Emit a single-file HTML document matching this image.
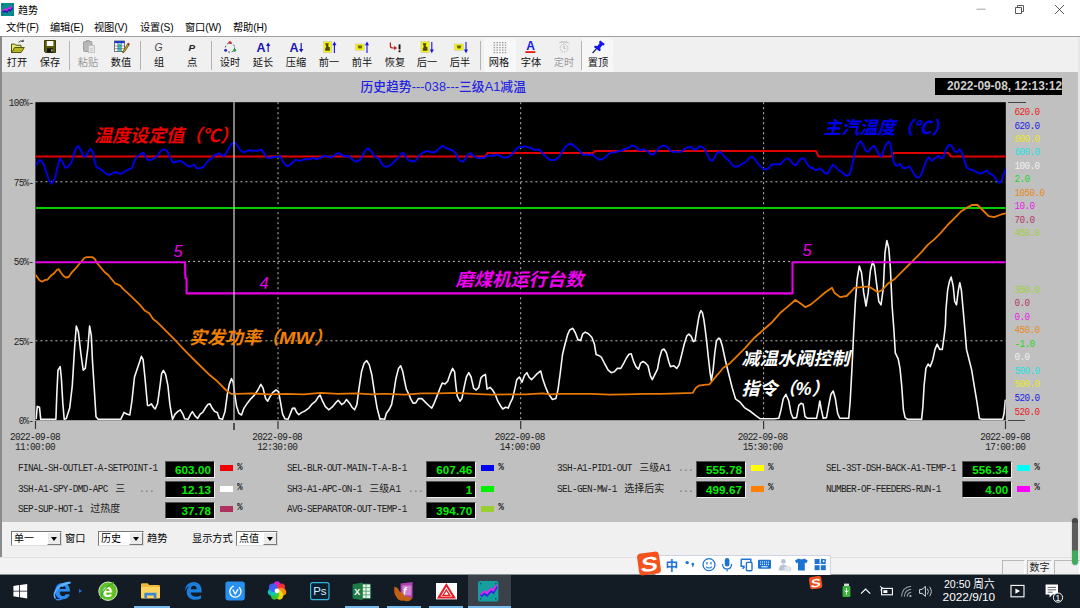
<!DOCTYPE html><html lang="zh"><head><meta charset="utf-8"><title>趋势</title><style>
*{box-sizing:border-box;margin:0;padding:0}
html,body{width:1080px;height:608px;overflow:hidden;background:#f0f0f0}
body{position:relative;font-family:"Liberation Sans","Noto Sans CJK SC",sans-serif;font-size:10px;color:#000}
.abs{position:absolute}
#title{left:0;top:0;width:1080px;height:19px;background:#fff}
#menu{left:0;top:19px;width:1080px;height:17px;background:#fff}
#menu span{position:absolute;top:2px;font-size:10.2px;line-height:13px;white-space:nowrap;letter-spacing:-0.1px}
#tb{left:0;top:36px;width:1080px;height:36px;background:#f0f0f0;border-top:1px solid #a0a0a0}
.tbl{position:absolute;top:19px;font-size:10.2px;line-height:13px;width:30px;text-align:center;white-space:nowrap;color:#111}
.sep{position:absolute;top:4px;width:1px;height:29px;background:#b4b4b4}
#main{left:0;top:72px;width:1080px;height:450px;background:#c0c0c0}
#lb{left:0;top:36px;width:2px;height:521px;background:#8a8a8a;z-index:5}
.mono{font-family:"Liberation Mono","Noto Sans CJK SC",monospace;font-size:9.4px;letter-spacing:-0.64px;white-space:nowrap;color:#222;line-height:10px;transform:scaleY(1.16);transform-origin:50% 60%}
.sc{position:absolute;left:1014.6px;font-family:"Liberation Mono",monospace;font-size:9.4px;letter-spacing:-0.64px;line-height:10px;white-space:nowrap;transform:scaleY(1.16);transform-origin:50% 60%}
.yl{position:absolute;width:33.6px;text-align:right;left:0}
.xl{position:absolute;width:60px;text-align:center}
.lg{position:absolute;white-space:nowrap;line-height:11px;font-size:9.4px}
.cj{font-family:"Liberation Mono","Noto Sans CJK SC",sans-serif;font-size:10px;letter-spacing:0;color:#222;margin-left:7.5px}
.vb{position:absolute;width:49.6px;height:17px;background:#000;border:1px solid #555;border-right-color:#eee;border-bottom-color:#eee;color:#00f000;font-weight:bold;font-size:11.6px;line-height:15px;text-align:right;padding-right:2.6px;font-family:"Liberation Sans",sans-serif;letter-spacing:0.1px}
.sw{position:absolute;width:13px;height:6px}
.pc{position:absolute}
#ctl{left:0;top:522px;width:1080px;height:36px;background:#f0f0f0}
.cb{position:absolute;top:9px;height:15px;background:#fff;border:1px solid #777;border-right-color:#ddd;border-bottom-color:#ddd;font-size:10px;line-height:13px;padding-left:2px;white-space:nowrap}
.cb i{position:absolute;right:0;top:0;width:14px;height:13px;background:#ececec;border:1px solid #777;border-left-color:#fff;border-top-color:#fff}
.cb i:after{content:"";position:absolute;left:3px;top:4px;border:3px solid transparent;border-top:4px solid #000;border-bottom:0}
.ct{position:absolute;top:10px;font-size:10.2px;line-height:13px;white-space:nowrap}
#status{left:0;top:557px;width:1080px;height:18px;background:#f2f2f2;border-top:1px solid #e0e0e0}
#task{left:0;top:574px;width:1080px;height:34px;background:#141c26}
.ul{position:absolute;top:32px;height:2px;background:#76b9ed}
</style></head><body>
<div id="title" class="abs">
<svg class="abs" style="left:1.2px;top:2.8px" width="13.3" height="13.1" viewBox="0 0 14 14" preserveAspectRatio="none"><rect width="14" height="14" rx="0.8" fill="#0c8e8e"/><circle cx="1.6" cy="1.6" r="0.7" fill="#064848"/><circle cx="12.4" cy="1.6" r="0.7" fill="#064848"/><circle cx="1.6" cy="12.4" r="0.7" fill="#064848"/><circle cx="12.4" cy="12.4" r="0.7" fill="#064848"/><path d="M2,9.6 L4.6,8 L6,9.2 L8.4,6.6 L9.8,7.6 L12,4.6" stroke="#1c1cb0" stroke-width="2.4" fill="none"/><path d="M2,8.2 L4.6,6.6 L6,7.8 L8.4,5.2 L9.8,6.2 L11.6,3.4" stroke="#e61ee6" stroke-width="1.5" fill="none"/></svg>
<span class="abs" style="left:18px;top:3.8px;font-size:10px;line-height:13px">趋势</span>
<svg class="abs" style="left:960px;top:0" width="120" height="19" viewBox="0 0 120 19"><path d="M16.5,9.2 h9" stroke="#999" stroke-width="0.9" fill="none"/><path d="M55.5,7.5 h6 v6 h-6 z M57.5,7.5 v-2 h6 v6 h-2" stroke="#333" stroke-width="0.8" fill="none"/><path d="M95,5 l9,9 M104,5 l-9,9" stroke="#333" stroke-width="0.8" fill="none"/></svg>
</div>
<div id="menu" class="abs">
<span style="left:6px">文件(F)</span>
<span style="left:50px">编辑(E)</span>
<span style="left:94px">视图(V)</span>
<span style="left:140px">设置(S)</span>
<span style="left:185px">窗口(W)</span>
<span style="left:233px">帮助(H)</span>
</div>
<div id="tb" class="abs">
<div class="abs" style="left:582px;top:1px;width:31px;height:34px;background:#f6f6f6"></div>
<div class="abs" style="left:484px;top:1px;width:32px;height:34px;background:#f7f7f7"></div>
<span class="tbl" style="left:2px;color:#111">打开</span>
<span class="tbl" style="left:35px;color:#111">保存</span>
<span class="tbl" style="left:73px;color:#9a9a9a">粘贴</span>
<span class="tbl" style="left:106px;color:#111">数值</span>
<span class="tbl" style="left:144px;color:#111">组</span>
<span class="tbl" style="left:177px;color:#111">点</span>
<span class="tbl" style="left:215px;color:#111">设时</span>
<span class="tbl" style="left:248px;color:#111">延长</span>
<span class="tbl" style="left:281px;color:#111">压缩</span>
<span class="tbl" style="left:314px;color:#111">前一</span>
<span class="tbl" style="left:347px;color:#111">前半</span>
<span class="tbl" style="left:380px;color:#111">恢复</span>
<span class="tbl" style="left:412px;color:#111">后一</span>
<span class="tbl" style="left:445px;color:#111">后半</span>
<span class="tbl" style="left:484px;color:#111">网格</span>
<span class="tbl" style="left:516px;color:#111">字体</span>
<span class="tbl" style="left:549px;color:#9a9a9a">定时</span>
<span class="tbl" style="left:583px;color:#111">置顶</span>
<div class="sep" style="left:69px"></div>
<div class="sep" style="left:140px"></div>
<div class="sep" style="left:211px"></div>
<div class="sep" style="left:479.5px"></div>
<div class="sep" style="left:581px"></div>
</div>
<div id="main" class="abs"></div>
<div id="lb" class="abs"></div>
<div class="abs" style="left:1078px;top:37px;width:2px;height:520px;background:#e6e6e6;z-index:4"></div>
<svg class="abs" style="left:0;top:36px" width="640" height="36" viewBox="0 36 640 36" font-family="Liberation Sans,sans-serif">
<path d="M11.5,52.5 v-8.5 h3.2 l1,1.2 h5.3 v2.3" fill="#e6e66e" stroke="#55550a" stroke-width="1"/>
<path d="M11.5,52.5 l3.2,-5 h9.6 l-3.2,5 z" fill="#b4b428" stroke="#55550a" stroke-width="1"/>
<path d="M18.5,42.3 q2.2,-2.6 4.6,-0.6" stroke="#333" fill="none" stroke-width="0.9"/><path d="M21.3,41.2 l2.4,0.8 l-0.2,-2.4 z" fill="#333"/>
<path d="M44.5,40.5 h11 v12 h-10 l-1,-1 z" fill="#5a5a10" stroke="#3c3c00" stroke-width="1"/>
<rect x="46.8" y="41" width="6.6" height="5" fill="#fafafa"/>
<rect x="47" y="48.3" width="6" height="4.2" fill="#111"/><rect x="51.3" y="49.3" width="1.2" height="2.2" fill="#ddd"/>
<rect x="83.5" y="41.5" width="8.5" height="10" rx="1" fill="#b8b8b8" stroke="#a0a0a0" stroke-width="1"/><rect x="86" y="40" width="3.6" height="2.4" fill="#a8a8a8"/>
<rect x="88.5" y="45.5" width="6" height="7" fill="#e6e6e6" stroke="#bbb" stroke-width="0.8"/><path d="M90,48.5 h3 M90,50.3 h3" stroke="#bbb" stroke-width="0.6"/>
<rect x="114.5" y="41" width="10" height="10.5" fill="#fff" stroke="#555" stroke-width="0.8"/>
<rect x="114.5" y="41" width="10" height="2.2" fill="#2038c8"/>
<rect x="118" y="43.6" width="3.2" height="7.6" fill="#30d0d0"/>
<path d="M114.5,46 h10 M114.5,48.7 h10 M117.8,43 v8.5 M121.3,43 v8.5" stroke="#555" stroke-width="0.6"/>
<path d="M127.6,44 l-4.2,6.6 l-0.6,2.4 l2,-1.5 l4.2,-6.6 z" fill="#d8c020" stroke="#403000" stroke-width="0.7"/><path d="M127.6,44 l1.4,0.9 l0.6,-1 l-1.4,-0.9 z" fill="#d02020" stroke="#802020" stroke-width="0.5"/>
<text x="154.4" y="51" font-size="10.4" font-style="italic" fill="#4a4a4a">G</text>
<text x="188.6" y="51" font-size="9.8" font-style="italic" font-weight="bold" fill="#222">P</text>
<circle cx="230" cy="47.6" r="4.6" fill="none" stroke="#333" stroke-width="1" stroke-dasharray="1.6,2"/>
<circle cx="230" cy="42.4" r="1.5" fill="#d03030"/><circle cx="234.6" cy="50.2" r="1.5" fill="#20a040"/><circle cx="225.6" cy="50.2" r="1.5" fill="#3030c0"/>
<text x="256.5" y="52" font-size="12.5" font-weight="bold" fill="#1818b0">A</text>
<path d="M268.2,52 V44" stroke="#1818b0" stroke-width="1.2"/><path d="M266.0,46 L268.2,42.6 L270.4,46 z" fill="#1818b0"/>
<text x="289.5" y="52" font-size="12.5" font-weight="bold" fill="#1818b0">A</text>
<path d="M301.2,43 V51" stroke="#1818b0" stroke-width="1.2"/><path d="M299.0,49 L301.2,52.4 L303.4,49 z" fill="#1818b0"/>
<rect x="323.4" y="41.6" width="8.4" height="11" fill="#f4f410" stroke="#c8c8a0" stroke-width="0.6"/>
<path d="M325.2,43.2 h3.6 l-0.8,3 l1.8,1 v3.6 h-4.6 v-2.4 l1,-1.6 z" fill="#4a4a00"/>
<path d="M334.4,53 V43.5" stroke="#1010f0" stroke-width="1.1"/><path d="M332.4,45.2 L334.4,41.6 L336.4,45.2 z" fill="#1010f0"/>
<rect x="355.6" y="44" width="8.6" height="6.2" fill="#f4f410" stroke="#c8c8a0" stroke-width="0.6"/>
<path d="M357.6,45.4 h4.8 l-0.8,3 h-3.2 z" fill="#6a6a00"/>
<path d="M367,53 V43.5" stroke="#1010f0" stroke-width="1.1"/><path d="M365,45.2 L367,41.6 L369,45.2 z" fill="#1010f0"/>
<path d="M390.4,42.4 V46 Q390.4,48 393,48 H395" stroke="#c01818" stroke-width="1.2" fill="none"/><path d="M394.2,45.8 L397,48 L394.2,50.2 z" fill="#c01818"/>
<rect x="398.6" y="44.4" width="1.9" height="5" fill="#111"/><rect x="398.6" y="50.4" width="1.9" height="1.8" fill="#111"/>
<rect x="421" y="41.6" width="8.2" height="11" fill="#f4f410" stroke="#c8c8a0" stroke-width="0.6"/>
<path d="M422.8,43.2 h3.6 l-0.8,3 l1.8,1 v3.6 h-4.6 v-2.4 l1,-1.6 z" fill="#4a4a00"/>
<path d="M431.8,42 V51" stroke="#1010f0" stroke-width="1.1"/><path d="M429.8,49.6 L431.8,53.2 L433.8,49.6 z" fill="#1010f0"/>
<rect x="454.6" y="44" width="8.6" height="6.2" fill="#f4f410" stroke="#c8c8a0" stroke-width="0.6"/>
<path d="M456.6,45.4 h4.8 l-0.8,3 h-3.2 z" fill="#6a6a00"/>
<path d="M466,42 V51" stroke="#1010f0" stroke-width="1.1"/><path d="M464,49.6 L466,53.2 L468,49.6 z" fill="#1010f0"/>
<path d="M493.6,42.6 h12.6" stroke="#9a9a9a" stroke-width="1.1" stroke-dasharray="1.5,1.3"/>
<path d="M493.6,45.1 h12.6" stroke="#9a9a9a" stroke-width="1.1" stroke-dasharray="1.5,1.3"/>
<path d="M493.6,47.6 h12.6" stroke="#9a9a9a" stroke-width="1.1" stroke-dasharray="1.5,1.3"/>
<path d="M493.6,50.1 h12.6" stroke="#9a9a9a" stroke-width="1.1" stroke-dasharray="1.5,1.3"/>
<path d="M493.6,52.6 h12.6" stroke="#9a9a9a" stroke-width="1.1" stroke-dasharray="1.5,1.3"/>
<text x="526.2" y="50.2" font-size="12" font-weight="bold" fill="#1818e0">A</text><rect x="525.4" y="51.2" width="10" height="1.8" fill="#e81818"/>
<circle cx="564" cy="48.2" r="3.9" fill="none" stroke="#b4b4b4" stroke-width="1" stroke-dasharray="1.4,1"/>
<path d="M559.4,43.4 q1.2,-2.4 3.4,-1.2 M568.6,43.4 q-1.2,-2.4 -3.4,-1.2 M564,41 v2.4 M564,46 v2.4 h1.6" stroke="#b0b0b0" stroke-width="1" fill="none"/>
<path d="M600.2,40.6 l4.6,3.4 l-1.2,1.6 l-1.2,-0.4 l-2.2,2.8 l0.6,2.2 l-1.4,1 l-5.6,-4.2 l1.2,-1.2 l2.4,0.2 l2.2,-2.8 l-0.6,-1.2 z" fill="#1414f0"/><path d="M596.6,48.6 L592.6,53" stroke="#1a1a60" stroke-width="1.2"/>
</svg>
<svg class="abs" style="left:0;top:0" width="1080" height="608" viewBox="0 0 1080 608">
<defs><clipPath id="cc"><rect x="35.4" y="102.2" width="970.4" height="318.0"/></clipPath></defs>
<rect x="35.4" y="102.2" width="970.4" height="318.0" fill="#000"/>
<g clip-path="url(#cc)">
<line x1="35.4" x2="1005.8" y1="181.8" y2="181.8" stroke="#bcbcbc" stroke-width="1" stroke-dasharray="2,3"/>
<line x1="188" x2="791.5" y1="261.4" y2="261.4" stroke="#bcbcbc" stroke-width="1" stroke-dasharray="2,3"/>
<line x1="35.4" x2="1005.8" y1="340.8" y2="340.8" stroke="#bcbcbc" stroke-width="1" stroke-dasharray="2,3"/>
<line x1="278" x2="278" y1="102.2" y2="420.2" stroke="#bcbcbc" stroke-width="1" stroke-dasharray="2,3"/>
<line x1="520.7" x2="520.7" y1="102.2" y2="420.2" stroke="#bcbcbc" stroke-width="1" stroke-dasharray="2,3"/>
<line x1="763.6" x2="763.6" y1="102.2" y2="420.2" stroke="#bcbcbc" stroke-width="1" stroke-dasharray="2,3"/>
<path d="M35,156.5 L485,156.5 L487.5,153 L593,153 L595,151 L816,151 L818.5,156.5 L891.5,156.5 L893.5,153 L948.5,153 L951,156.5 L1006,156.5" fill="none" stroke="#e00000" stroke-width="2" stroke-linejoin="round" stroke-linecap="round" />
<path d="M36,165 L40,159.7 L43.3,163.3 L46.7,173.3 L49.2,180.8 L51.7,183.7 L55,178.3 L57.5,166.7 L60,158.3 L62.5,161.7 L65,167.5 L67.5,167.5 L70.8,163.3 L73.3,157.5 L75.8,148.3 L78.3,145.8 L80.8,150 L83.3,155.8 L85.8,156.7 L88.3,151.7 L90.8,148.7 L93,152.5 L95,162.5 L96.7,167.5 L100,168.7 L103.3,171.3 L106.7,174.2 L110,174.7 L113.3,173 L115.8,172 L118.3,173.3 L121.7,173.7 L125,171.3 L128.3,169.7 L131.7,168.3 L134.2,161.7 L136.7,156.7 L140,154.7 L143,152.5 L145,155.8 L147.5,159.7 L150.8,160 L154.2,158.3 L157.5,155.8 L160.8,150.8 L164.2,149.2 L167,150.8 L170,157.5 L173,162.5 L176.7,161.7 L180,160.8 L183.3,162.5 L186.7,165.3 L190,166.7 L194.2,164.7 L196.7,168.3 L200,168.3 L203.3,167 L206.7,162.5 L210,159.2 L210.8,159.2 L215,155 L219.2,153.3 L222.5,155.8 L225,155.3 L228.3,149.2 L231.7,143.7 L235,142.5 L237.5,145.8 L240.8,150.8 L243.7,152.5 L248.3,150.3 L253.3,150.7 L258.3,150.7 L261.3,149.7 L264.2,153.3 L266.7,157.5 L270,158 L274.2,157 L278.3,156.7 L280.3,156.3 L282.5,160.8 L285.8,165.3 L288.3,166.3 L291.7,163.3 L295.8,159.7 L300,160.8 L304.2,159.3 L309.2,159.2 L313.3,158 L316.7,159.2 L320.8,157.5 L325,155.8 L328.3,156.7 L331.7,157.5 L335,154.7 L338.3,152.7 L341.7,155 L345,156.3 L348.3,155.8 L351.7,158.7 L355,161.3 L358.3,161.3 L361.7,157.5 L365,150.8 L367.5,148.3 L370.8,150.8 L374.2,155.8 L377.5,158.3 L380,160 L380.8,162.5 L384.2,166.3 L387.5,166.7 L391.7,164.2 L395.8,160 L399.2,156.7 L401.7,153.3 L403.3,153 L405.8,156.7 L408.3,160 L411.7,161.3 L414.7,161.3 L417.5,158.3 L420,154.7 L423.3,152.5 L427.5,150.8 L430.8,152.2 L435,152.2 L438.3,149.2 L441.3,146.7 L443.3,146 L445.8,148 L449.2,149.2 L452.5,150.3 L455,152.5 L457.5,157.5 L460,160.8 L463,161.7 L465.8,158.3 L468.3,154.2 L470.3,153 L472.5,155.3 L475.8,157.5 L480,158 L484.2,158 L486.7,155.8 L490,155.8 L494.2,155.8 L497.5,154.7 L500,155.8 L503.3,157.5 L507.5,157.5 L510.8,155.3 L514.2,151.3 L517.5,148 L520,146.7 L522.5,147.2 L525.3,146.2 L528.3,147.5 L530.8,148 L534.2,149.7 L537.5,149.7 L540,150 L542.5,153 L545.8,156.7 L550,159.7 L550.8,160 L555,160 L559.2,156.7 L562.5,150.8 L565.8,146.7 L569.2,144 L571.7,144 L575,146.7 L578.3,149.2 L580.8,152.5 L583.3,154.7 L587.5,154.7 L592.5,154.7 L595.8,157.5 L599.2,159.7 L601.7,159.3 L605,157.5 L608.3,154.2 L611.7,152.5 L615,152.5 L618.3,151.3 L621.7,150.8 L625,149.2 L629.2,147.5 L631.7,145.5 L634.2,146.2 L636.7,147.5 L639.2,150 L641.7,150 L644.2,149.2 L647.5,151.3 L650.8,154.2 L654.2,154.2 L656.7,150.8 L659.2,147.5 L662.5,145.8 L665.8,146 L668.3,148 L670.8,151.2 L673.3,152.2 L675.8,151.3 L678.3,152.3 L681.7,151.3 L685,148.7 L687.5,147.2 L690,147 L692.5,148 L695,150 L697.5,148.3 L699.7,146.2 L702.5,147.2 L705,149.7 L707.5,155 L710,160 L712.5,160.8 L714.7,157.5 L716.7,153.3 L720,151.7 L721.7,153.3 L724.2,156.7 L728.3,160 L731.7,164.2 L735,166.7 L738.3,166.3 L741.7,164.2 L745.8,162 L749.2,158 L751.7,156.7 L754.2,158.3 L756.7,162 L760,165.8 L763.3,169.2 L766.7,169.2 L769.2,167.5 L771.7,164.7 L775.8,164.2 L780.8,164.2 L784.2,160 L787,158.3 L790,159.7 L792.5,163.3 L795,165.3 L797,164.2 L799.2,160.3 L801.7,158.3 L804.2,158.7 L806.7,163 L809.5,167 L812.5,168 L815,170 L817.5,169.7 L819.7,168.3 L822,170 L824.7,173 L827.5,173.7 L830,169.2 L832.8,164.7 L835,166.3 L837.5,169.2 L840,170.8 L842.5,172.5 L845,175 L847.5,175.8 L850,173.7 L852,165.8 L853.7,157.5 L855.8,149.2 L858.3,143.3 L860.8,141.3 L863,145 L865.8,150.8 L868.3,152 L870.8,148.3 L874.2,145.8 L876.7,150 L879.2,155 L881.7,156.3 L884.2,149.2 L886.7,143.3 L888.7,141.7 L890,143.3 L891.3,149.2 L893,159.2 L895,165 L897.5,165.8 L900,163.7 L902.5,167.5 L905.8,168.3 L909.2,166.3 L911.7,170 L914.2,174.2 L916.7,177.5 L919.2,177.5 L921.7,173.3 L924.2,166.7 L926.7,160 L928.7,157 L931.7,160.8 L935,158.3 L938,155.8 L940.8,158 L943.3,157.5 L945.8,150 L948.3,145.3 L950.3,144.7 L952.5,147.5 L955,151.7 L957,152.5 L959.7,149.2 L962,152.5 L964.2,160 L966.7,167.5 L969.2,169.2 L972.5,170 L975.8,171.7 L980,173.7 L983.3,172.5 L986.7,170.5 L990,173.7 L993.3,175.3 L996.7,180 L999.2,183 L1001.3,181.7 L1003.3,175 L1005.8,169.2" fill="none" stroke="#0000e8" stroke-width="1.9" stroke-linejoin="round" stroke-linecap="round" />
<path d="M36.2,418.5 L37.3,406.4 L39.5,407.2 L40.7,419.3 L47.3,419.3 L55.9,419.3 L56.8,394.3 L58,370.1 L60.2,366.6 L61.4,378.7 L62.8,402.9 L64.2,419.3 L66.3,418.5 L69.7,408.1 L72.3,385.6 L74.6,347.6 L76.3,326 L78.4,332.1 L81,354.5 L83.2,370.1 L85.3,368.4 L87.9,347.6 L89.6,326 L91.3,335.5 L92.5,361.5 L94.3,389.1 L96,416.7 L98.2,419.3 L107.7,419.3 L120.7,419.3 L124.1,412.4 L126.7,414.1 L129.8,415 L131.9,401.2 L134.5,377 L137.1,369.2 L139.7,361.5 L141.4,356.3 L143.1,359.7 L144.9,377 L147.5,405.5 L149.2,405.5 L151.3,403.8 L153.5,407.2 L155.2,409 L157.5,403.8 L159.6,389.1 L161.6,373.6 L163.4,370.4 L165.6,374.4 L167.9,385.6 L169.9,404.6 L172.5,419.3 L175.1,414.1 L177.7,411.6 L180.3,409.8 L182.9,414.1 L184.6,418.8 L188.1,419.3 L190.7,414.1 L192.4,411.6 L195,415.9 L197.6,418.5 L200.2,414.1 L202.7,412.4 L205.3,408.1 L207.9,404.6 L210,403.8 L212.1,408.1 L214.7,411.6 L217.3,412.4 L219.3,418.5 L222.5,419.3 L225,411.6 L227.3,394.3 L229.4,383.9 L231.4,378.7 L233.2,382.2 L234.5,392.6 L236.6,406.4 L238.9,413.3 L241.5,415 L244,408.1 L247.5,402.9 L251,398.6 L254.4,395.1 L257.9,390 L260.8,384.3 L263.1,388.2 L265.6,398.6 L267.7,401.2 L270,396.9 L272.6,392.6 L276,390 L278.6,391.7 L280.3,401.2 L282.6,414.1 L285,418.8 L288.1,419.3 L290.2,414.1 L292.4,408.4 L294.7,408.1 L296.7,412.4 L298.8,414.7 L301.9,412.4 L305.4,410.7 L308.8,408.1 L312.3,403.8 L315.7,401.2 L318.3,396.9 L320.1,395.1 L322.6,401.2 L325.2,406.4 L328.7,409.8 L332.1,407.2 L335.6,402.9 L338.2,400.3 L341.7,404.6 L344.2,402.9 L346.5,399.5 L349.4,402.9 L352,407.2 L354.6,409.8 L356.9,404.6 L358.9,389.1 L361.5,371.8 L364.1,363.2 L366.7,360.6 L369.3,364.9 L371.9,375.3 L374.5,392.6 L377.1,408.1 L380,419.3 L380.7,418.8 L384.7,419.3 L386.4,413.3 L389,409.8 L391.6,404.6 L393.8,392.6 L395.9,378.7 L398.5,368.4 L400.7,365.8 L402.8,371.8 L404.5,380.5 L406.3,389.1 L408.9,394.3 L410.6,398.6 L413.2,403.3 L415.8,402.9 L418.4,398.6 L421.8,398.6 L425.3,402.1 L428.7,405.5 L431.8,408.1 L434.3,402.9 L437.4,395.1 L440,388.2 L442.2,383.1 L445.1,383.9 L447.7,381.3 L450.3,373.6 L452.6,368.4 L454.6,371.8 L455.9,385.6 L457.2,396 L459.8,401.2 L461.9,398.6 L464.1,387.4 L466.4,377 L468.8,372.7 L471.1,377 L473.6,388.2 L476.2,390 L478.8,387.4 L480.9,377.9 L483.1,375.6 L485.4,374.4 L487.1,389.1 L490.1,387.4 L492.6,390 L495.2,394.3 L497.8,401.2 L500.4,405.5 L502.7,409 L505.6,407.2 L508.2,408.1 L510.3,402.9 L512.5,398.6 L514.8,389.1 L516.8,379.6 L519.4,377 L522,382.2 L524.6,375.3 L526.9,372.7 L528.9,377 L531.5,379.6 L534.1,377 L537.2,373.6 L540.7,371 L542.7,378.7 L545.3,386.5 L547.9,392.6 L550,396 L552.4,399.5 L555.9,398.6 L558.1,389.1 L560.4,371.8 L562.5,354.5 L565,344.2 L567.6,334.7 L569.7,330 L572.8,328.3 L575.4,333 L578,339.9 L580.6,340.4 L582.8,333.8 L585.3,332.1 L588.4,333.8 L591.8,337.3 L594.4,344.2 L596.1,354.5 L598.7,355.4 L601.3,357.1 L604.8,364 L608.2,370.1 L611.2,372.7 L614.3,371.8 L617.4,368.4 L620.8,368.4 L623.8,363.2 L626.4,358 L629,354.2 L631.2,353.7 L633.3,360.6 L635.9,366.6 L638.5,369.2 L640.5,363.2 L643.1,361.5 L645.7,363.2 L648,365.8 L650.2,375.3 L652.3,379.6 L654.9,374.4 L657.5,369.2 L659.5,358 L661.8,350.2 L664,349 L666.4,352.8 L668.7,361.5 L670.4,366.6 L673.9,365.8 L676.8,368.4 L679.1,364.9 L681.7,354.5 L684.2,344.2 L686.8,335.9 L688.9,334.2 L691.2,336.4 L693.4,341.6 L695.1,340.7 L696.9,328.6 L698.6,318.4 L699.8,313.1 L701,310.7 L702.4,312.6 L703.8,319.1 L705.1,328.6 L706.7,341.6 L708.4,358 L710.2,373.6 L711.4,380.5 L713.1,370.1 L714.8,352.8 L716.5,340.7 L718.8,338.1 L720,339 L722.2,345.5 L725.5,361 L728.8,374.3 L732.2,387.7 L735.5,398.8 L739.9,402.1 L744.4,407.6 L749.9,411 L755.5,415.4 L759.9,418.7 L765.5,418.7 L774.3,418.7 L778.8,418.3 L781,409.9 L783.2,398.8 L785.9,394.3 L788.8,401 L791,413.2 L793.2,418.3 L796.5,417.6 L798.8,405.4 L801,403.2 L803.2,404.3 L805,416.5 L807.6,418.3 L816.5,418.3 L818.3,409.9 L819.8,401 L821.4,409.9 L823.2,418.3 L826.5,417.6 L828.7,405.4 L830.9,394.3 L833.2,391 L835.4,398.8 L837.6,413.2 L839.8,418.3 L848.7,418.3 L850.2,401 L852,367.7 L853.8,330 L855.4,301.1 L857.1,279.3 L859.3,266 L861.5,272.7 L863.7,292.7 L866,306 L868.2,292.7 L870.4,270.5 L872.6,261.6 L874.4,266 L876.6,283.8 L878.8,301.5 L881,304.9 L883.3,288.2 L885,252.7 L886.8,240.5 L888.8,248.3 L890.4,268.2 L892.1,306 L893.9,329.9 L895.3,352.8 L898.2,358.9 L900,368.4 L901.7,385.6 L903.4,409.8 L905.1,417.6 L907.7,419.3 L921.6,419.3 L922.9,406.4 L924.1,385.6 L925.9,368.4 L928.1,364 L930.2,366.6 L932.8,359.7 L935,349.4 L937.1,344.2 L939.7,349.4 L942.3,349.4 L944,337.3 L945.4,325.2 L945.9,310.4 L947.6,290.4 L949.4,281.6 L951.2,277.1 L953.2,286 L954.7,301.5 L956.5,304.9 L958.3,290.4 L959.8,282.7 L961.4,290.4 L963.2,310.4 L964.9,329.9 L966.5,349.4 L969.1,359.7 L971.7,370.1 L974.2,385.6 L976.8,401.2 L979.4,418.5 L982,419.3 L1002.7,419.3 L1004.1,413.3 L1005.3,400.3" fill="none" stroke="#f6f6f6" stroke-width="1.6" stroke-linejoin="round" stroke-linecap="round" />
<line x1="35.4" x2="1005.8" y1="208" y2="208" stroke="#00d000" stroke-width="1.8"/>
<path d="M36,275.3 L39.2,280 L42,281.7 L45,280 L47.5,279.7 L50.8,275.8 L54.2,273.3 L56.7,270 L58.7,269.2 L60.8,272.5 L63.3,275.8 L65.8,277.5 L68.7,277 L71.7,272.5 L75,269.2 L78.3,265 L81.7,261.3 L84.2,258 L86.7,257.2 L92.5,257.2 L95,259.2 L96.7,262.5 L100,266.7 L105,272.5 L108.3,275 L111.7,279.2 L115,283.3 L120,285.3 L123.3,289.2 L128.3,293.7 L133.3,298.3 L139.2,304.2 L145,310.8 L149.2,313.3 L153.3,319.2 L156.7,321.7 L161.7,326.7 L166.7,331.7 L171.7,336.7 L175,340 L185.5,351.1 L195.8,361.5 L210,375.3 L217.3,381.3 L225.9,390 L231.1,393.9 L238,393.9 L251.8,393.4 L269.1,394.3 L286.4,393.9 L303.6,394.3 L320.9,392.9 L338.2,393.9 L355.5,393.4 L372.7,394.3 L380,393.9 L387.3,393.9 L404.5,394.6 L421.8,393.4 L439.1,393.4 L456.4,392.9 L473.6,393.9 L490.9,394.6 L508.2,394.3 L525.5,394.3 L542.7,393.4 L550,394.3 L557.3,393.9 L574.5,393.9 L591.8,393.9 L609.1,394.6 L626.4,394.3 L643.6,393.9 L660.9,393.9 L678.2,393.4 L692.9,392.9 L695.5,388.2 L698.9,385.6 L704.1,384.8 L709.3,384.3 L712.7,380.5 L716.2,376.1 L720,371.8 L723.3,367.7 L730,363.2 L736.6,356.6 L745.5,347.7 L754.4,337.7 L763.2,330 L772.1,322.2 L781,312.2 L787.7,306.6 L795.4,300 L801,303.8 L805.4,307.3 L811,304.4 L817.6,298.9 L825.4,292.2 L832,287.8 L834.4,292.7 L840,297.1 L846.6,296 L851.1,291.5 L854.4,287.8 L861.1,287.1 L868.8,286.4 L873.3,289.3 L877.7,292.2 L882.2,290 L887.7,283.8 L894.4,279.3 L901,272.7 L907.7,266 L914.3,259.4 L921,252.7 L927.7,244.9 L934.3,239.4 L941,232.7 L947.6,225 L954.3,218.3 L960.9,211.6 L966.5,207.9 L972,205 L977.6,205 L983.1,210.5 L988.7,216.1 L994.2,217.2 L999.8,215 L1003.1,213.9 L1006,213.3" fill="none" stroke="#e87800" stroke-width="1.8" stroke-linejoin="round" stroke-linecap="round" />
<path d="M35,262.2 L185,262.2 L185.4,278 L186.6,279 L186.6,293.4 L792.5,293.4 L792.5,262.2 L1006,262.2" fill="none" stroke="#e800e8" stroke-width="2.1" stroke-linejoin="round" stroke-linecap="round" />
</g>
<line x1="234" x2="234" y1="102.2" y2="420.2" stroke="#b8b8b8" stroke-width="1.4"/>
<line x1="234" x2="234" y1="423" y2="430" stroke="#333" stroke-width="1.6"/>
<line x1="35.5" x2="35.5" y1="421" y2="429" stroke="#333" stroke-width="1.2"/>
<line x1="278" x2="278" y1="421" y2="429" stroke="#333" stroke-width="1.2"/>
<line x1="520.7" x2="520.7" y1="421" y2="429" stroke="#333" stroke-width="1.2"/>
<line x1="763.6" x2="763.6" y1="421" y2="429" stroke="#333" stroke-width="1.2"/>
<line x1="1005.5" x2="1005.5" y1="421" y2="429" stroke="#333" stroke-width="1.2"/>
<line x1="1008" x2="1026" y1="102.5" y2="102.5" stroke="#444" stroke-width="1"/>
<line x1="1008" x2="1025" y1="420.5" y2="420.5" stroke="#444" stroke-width="1"/>
<text x="94" y="141.5" font-family="Liberation Sans,Noto Sans CJK SC,sans-serif" font-style="italic" font-weight="bold" font-size="18" fill="#f00000">温度设定值（℃）</text>
<text x="823.5" y="133.8" font-family="Liberation Sans,Noto Sans CJK SC,sans-serif" font-style="italic" font-weight="bold" font-size="18" fill="#0000f0">主汽温度（℃）</text>
<text x="455.5" y="286.3" font-family="Liberation Sans,Noto Sans CJK SC,sans-serif" font-style="italic" font-weight="bold" font-size="18.3" fill="#f000f0">磨煤机运行台数</text>
<text x="189" y="344.2" font-family="Liberation Sans,Noto Sans CJK SC,sans-serif" font-style="italic" font-weight="bold" font-size="18" fill="#f08000">实发功率（<tspan textLength="35" lengthAdjust="spacingAndGlyphs" font-size="16.6">MW</tspan>）</text>
<text x="741.5" y="364.5" font-family="Liberation Sans,Noto Sans CJK SC,sans-serif" font-style="italic" font-weight="bold" font-size="18" fill="#ffffff">减温水阀控制</text>
<text x="741.5" y="394.5" font-family="Liberation Sans,Noto Sans CJK SC,sans-serif" font-style="italic" font-weight="bold" font-size="18" fill="#ffffff">指令（%）</text>
<text x="173.5" y="257" font-family="Liberation Sans,sans-serif" font-style="italic" font-size="16.5" fill="#e000e0">5</text>
<text x="802.5" y="256" font-family="Liberation Sans,sans-serif" font-style="italic" font-size="16.5" fill="#e000e0">5</text>
<text x="259.5" y="288.5" font-family="Liberation Sans,sans-serif" font-style="italic" font-size="16.5" fill="#e000e0">4</text>
</svg>
<div class="abs" style="left:360.5px;top:80px;font-size:12.7px;line-height:15px;color:#2222e0;white-space:nowrap;letter-spacing:0.1px;font-weight:500">历史趋势---038---三级A1减温</div>
<div class="abs" style="left:935px;top:78px;width:127px;height:17px;background:#000;color:#cecece;font-weight:bold;font-size:11.9px;line-height:17px;text-align:right;padding-right:0;white-space:nowrap;overflow:hidden">2022-09-08, 12:13:12</div>
<div class="mono yl" style="top:98.5px">100%-</div>
<div class="mono yl" style="top:178.5px">75%-</div>
<div class="mono yl" style="top:258.0px">50%-</div>
<div class="mono yl" style="top:337.5px">25%-</div>
<div class="mono yl" style="top:416.5px">0%-</div>
<div class="mono xl" style="left:5.0px;top:432.6px">2022-09-08</div>
<div class="mono xl" style="left:5.0px;top:442.7px">11:00:00</div>
<div class="mono xl" style="left:247.2px;top:432.6px">2022-09-08</div>
<div class="mono xl" style="left:247.2px;top:442.7px">12:30:00</div>
<div class="mono xl" style="left:489.8px;top:432.6px">2022-09-08</div>
<div class="mono xl" style="left:489.8px;top:442.7px">14:00:00</div>
<div class="mono xl" style="left:732.6px;top:432.6px">2022-09-08</div>
<div class="mono xl" style="left:732.6px;top:442.7px">15:30:00</div>
<div class="mono xl" style="left:975.2px;top:432.6px">2022-09-08</div>
<div class="mono xl" style="left:975.2px;top:442.7px">17:00:00</div>
<div class="sc" style="top:108.1px;color:#e82020">620.0</div>
<div class="sc" style="top:121.5px;color:#2020e8">620.0</div>
<div class="sc" style="top:135.0px;color:#e8e820">600.0</div>
<div class="sc" style="top:148.4px;color:#20e0e0">600.0</div>
<div class="sc" style="top:161.9px;color:#f0f0f0">100.0</div>
<div class="sc" style="top:175.4px;color:#20d820">2.0</div>
<div class="sc" style="top:188.8px;color:#e88820">1050.0</div>
<div class="sc" style="top:202.2px;color:#e820e8">10.0</div>
<div class="sc" style="top:215.7px;color:#b03868">70.0</div>
<div class="sc" style="top:229.2px;color:#a0d040">450.0</div>
<div class="sc" style="top:285.8px;color:#a0d040">350.0</div>
<div class="sc" style="top:299.3px;color:#b03868">0.0</div>
<div class="sc" style="top:312.8px;color:#e820e8">0.0</div>
<div class="sc" style="top:326.4px;color:#e88820">450.0</div>
<div class="sc" style="top:339.9px;color:#20d820">-1.0</div>
<div class="sc" style="top:353.4px;color:#f0f0f0">0.0</div>
<div class="sc" style="top:366.9px;color:#20e0e0">500.0</div>
<div class="sc" style="top:380.4px;color:#e8e820">500.0</div>
<div class="sc" style="top:394.0px;color:#2020e8">520.0</div>
<div class="sc" style="top:407.5px;color:#e82020">520.0</div>
<div class="lg" style="left:18px;top:462.3px"><span class="mono" style="display:inline-block">FINAL-SH-OUTLET-A-SETPOINT-1</span></div>
<div class="vb" style="left:165px;top:460.7px">603.00</div>
<div class="sw" style="left:220px;top:465.3px;background:#f00000"></div>
<div class="mono pc" style="left:237px;top:462.5px;font-weight:bold">%</div>
<div class="lg" style="left:18px;top:482.8px"><span class="mono" style="display:inline-block">3SH-A1-SPY-DMD-APC</span><span class="cj">三</span></div>
<div class="mono lg" style="left:139.0px;top:483.8px;color:#707070">...</div>
<div class="vb" style="left:165px;top:481.2px">12.13</div>
<div class="sw" style="left:220px;top:485.8px;background:#ffffff"></div>
<div class="mono pc" style="left:237px;top:483.0px;font-weight:bold">%</div>
<div class="lg" style="left:18px;top:503.1px"><span class="mono" style="display:inline-block">SEP-SUP-HOT-1</span><span class="cj">过热度</span></div>
<div class="vb" style="left:165px;top:501.5px">37.78</div>
<div class="sw" style="left:220px;top:506.1px;background:#b03060"></div>
<div class="mono pc" style="left:237px;top:503.3px;font-weight:bold">%</div>
<div class="lg" style="left:287px;top:462.3px"><span class="mono" style="display:inline-block">SEL-BLR-OUT-MAIN-T-A-B-1</span></div>
<div class="vb" style="left:426.3px;top:460.7px">607.46</div>
<div class="sw" style="left:481.3px;top:465.3px;background:#0000f0"></div>
<div class="mono pc" style="left:498.3px;top:462.5px;font-weight:bold">%</div>
<div class="lg" style="left:287px;top:482.8px"><span class="mono" style="display:inline-block">SH3-A1-APC-ON-1</span><span class="cj">三级A1</span></div>
<div class="mono lg" style="left:408.0px;top:483.8px;color:#707070">...</div>
<div class="vb" style="left:426.3px;top:481.2px">1</div>
<div class="sw" style="left:481.3px;top:485.8px;background:#00f000"></div>
<div class="lg" style="left:287px;top:503.1px"><span class="mono" style="display:inline-block">AVG-SEPARATOR-OUT-TEMP-1</span></div>
<div class="vb" style="left:426.3px;top:501.5px">394.70</div>
<div class="sw" style="left:481.3px;top:506.1px;background:#9acd32"></div>
<div class="mono pc" style="left:498.3px;top:503.3px;font-weight:bold">%</div>
<div class="lg" style="left:557px;top:462.3px"><span class="mono" style="display:inline-block">3SH-A1-PID1-OUT</span><span class="cj">三级A1</span></div>
<div class="mono lg" style="left:678.0px;top:463.3px;color:#707070">...</div>
<div class="vb" style="left:696px;top:460.7px">555.78</div>
<div class="sw" style="left:751px;top:465.3px;background:#ffff00"></div>
<div class="mono pc" style="left:768px;top:462.5px;font-weight:bold">%</div>
<div class="lg" style="left:557px;top:482.8px"><span class="mono" style="display:inline-block">SEL-GEN-MW-1</span><span class="cj">选择后实</span></div>
<div class="mono lg" style="left:678.0px;top:483.8px;color:#707070">...</div>
<div class="vb" style="left:696px;top:481.2px">499.67</div>
<div class="sw" style="left:751px;top:485.8px;background:#ff8000"></div>
<div class="mono pc" style="left:768px;top:483.0px;font-weight:bold">%</div>
<div class="lg" style="left:826px;top:462.3px"><span class="mono" style="display:inline-block">SEL-3ST-DSH-BACK-A1-TEMP-1</span></div>
<div class="vb" style="left:962.3px;top:460.7px">556.34</div>
<div class="sw" style="left:1017.3px;top:465.3px;background:#00ffff"></div>
<div class="mono pc" style="left:1034.3px;top:462.5px;font-weight:bold">%</div>
<div class="lg" style="left:826px;top:482.8px"><span class="mono" style="display:inline-block">NUMBER-OF-FEEDERS-RUN-1</span></div>
<div class="vb" style="left:962.3px;top:481.2px">4.00</div>
<div class="sw" style="left:1017.3px;top:485.8px;background:#ff00ff"></div>
<div class="mono pc" style="left:1034.3px;top:483.0px;font-weight:bold">%</div>
<div id="ctl" class="abs">
<div class="cb" style="left:11px;width:51px">单一<i></i></div><span class="ct" style="left:65px">窗口</span>
<div class="cb" style="left:98px;width:46px">历史<i></i></div><span class="ct" style="left:147px">趋势</span>
<span class="ct" style="left:192px">显示方式</span><div class="cb" style="left:236px;width:42px">点值<i></i></div>
</div>
<div id="status" class="abs"><!--STATUS--></div>
<div class="abs" style="left:1002px;top:560px;width:23px;height:15px;border:1px solid #b8b8b8;border-right-color:#fff;border-bottom-color:#fff;background:#f0f0f0;font-size:10px;line-height:13px;text-align:center;color:#222;white-space:nowrap"></div>
<div class="abs" style="left:1027px;top:560px;width:25px;height:15px;border:1px solid #b8b8b8;border-right-color:#fff;border-bottom-color:#fff;background:#f0f0f0;font-size:10px;line-height:13px;text-align:center;color:#222;white-space:nowrap">数字</div>
<div class="abs" style="left:1054px;top:560px;width:26px;height:15px;border:1px solid #b8b8b8;border-right-color:#fff;border-bottom-color:#fff;background:#f0f0f0;font-size:10px;line-height:13px;text-align:center;color:#222;white-space:nowrap"></div>
<div class="abs" style="left:1071.8px;top:517.5px;width:6px;height:47.4px;border-radius:3px;background:linear-gradient(#444 0,#444 9%,#5c5c5c 11%,#5c5c5c 68%,#3daa5c 70%,#3daa5c 100%);box-shadow:0 0 2px rgba(0,0,0,0.25)"></div>
<svg class="abs" style="left:0;top:574px" width="1080" height="34" viewBox="0 574 1080 34" font-family="Liberation Sans,Noto Sans CJK SC,sans-serif">
<rect x="0" y="574" width="1080" height="34" fill="#131b25"/><rect x="0" y="574" width="1080" height="1" fill="#8b8f94"/>
<rect x="468" y="575" width="43" height="33" fill="#3a4149"/>
<rect x="134" y="606" width="36" height="2" fill="#76b9ed"/>
<rect x="345" y="606" width="34" height="2" fill="#76b9ed"/>
<rect x="387" y="606" width="34" height="2" fill="#76b9ed"/>
<rect x="429" y="606" width="34" height="2" fill="#76b9ed"/>
<rect x="468" y="606" width="43" height="2" fill="#76b9ed"/>
<path d="M13.4,586 l5.8,-0.9 v5.6 h-5.8 z M20,585 l7.2,-1.1 v6.8 h-7.2 z M13.4,591.6 h5.8 v5.6 l-5.8,-0.9 z M20,591.6 h7.2 v6.8 l-7.2,-1.1 z" fill="#fff"/>
<text x="54.2" y="599.4" font-size="30" font-weight="bold" fill="#2b8df2">e</text><path d="M55.4,598.6 q-3.4,-5.4 3.6,-11.8 q6,-5 11.6,-4.2 q-5,0.4 -9,4" stroke="#5ab4ff" stroke-width="1.6" fill="none"/><path d="M55.8,599.4 q6,1.6 13.4,-4.6" stroke="#2b8df2" stroke-width="1.4" fill="none"/>
<path d="M79,589 l3,2 l-3,2 z" fill="#2c6ee0"/>
<circle cx="108" cy="591.2" r="9.2" fill="#5fc02a" stroke="#d8f0c8" stroke-width="1"/><text x="102.4" y="597.4" font-size="18" font-weight="bold" fill="#fff">e</text><path d="M100.4,598.6 q2,-10 13.6,-16.4" stroke="#48a818" stroke-width="1.2" fill="none"/>
<path d="M141,584.6 q0,-1.4 1.4,-1.4 h5.2 l1.6,1.8 h9.4 q1.4,0 1.4,1.4 v11.6 h-19 z" fill="#f0b83c"/><rect x="141" y="587" width="19" height="11.4" rx="0.8" fill="#ffd45e"/><path d="M144.4,598.4 v-5.6 h12 v5.6 h-2.6 v-3 h-6.8 v3 z" fill="#3c86d8"/>
<path transform="translate(184.2,581.6)" fill-rule="evenodd" fill="#1b7fdc" d="M0.6,9.5 C0.8,4 4.8,0.3 9.4,0.3 C14.8,0.3 17.4,4.4 17.4,9 L17.4,11 L6.4,11 C6.7,14 9.4,15.1 11.9,15.1 C13.9,15.1 15.7,14.5 16.9,13.7 L16.9,17 C15.4,17.8 13.5,18.2 11.3,18.2 C5.9,18.2 2.5,15 2.5,10.4 C2.5,7.6 3.9,5.4 6.1,4.2 C3.5,5 1.6,7 0.6,9.5 Z M6.5,7.6 L12.5,7.6 C12.5,5.6 11.5,4.2 9.5,4.2 C7.7,4.2 6.7,5.8 6.5,7.6 Z"/>
<rect x="225.4" y="581.4" width="19.4" height="19" rx="2.4" fill="#2a90f0"/><circle cx="235.4" cy="591.6" r="5.6" fill="none" stroke="#fff" stroke-width="1.3" stroke-dasharray="29 6" transform="rotate(-50 235.4 591.6)"/><path d="M232.8,589.6 l2.5,4.4 l2.8,-4.8" stroke="#fff" stroke-width="1.3" fill="none"/>
<ellipse cx="277" cy="586.2" rx="4" ry="4.9" fill="#e020e0" transform="rotate(0 277 590.8)" opacity="0.93"/>
<ellipse cx="277" cy="586.2" rx="4" ry="4.9" fill="#ff3030" transform="rotate(51 277 590.8)" opacity="0.93"/>
<ellipse cx="277" cy="586.2" rx="4" ry="4.9" fill="#ff9a10" transform="rotate(103 277 590.8)" opacity="0.93"/>
<ellipse cx="277" cy="586.2" rx="4" ry="4.9" fill="#f4e010" transform="rotate(154 277 590.8)" opacity="0.93"/>
<ellipse cx="277" cy="586.2" rx="4" ry="4.9" fill="#30d030" transform="rotate(206 277 590.8)" opacity="0.93"/>
<ellipse cx="277" cy="586.2" rx="4" ry="4.9" fill="#10c8c0" transform="rotate(257 277 590.8)" opacity="0.93"/>
<ellipse cx="277" cy="586.2" rx="4" ry="4.9" fill="#4060ff" transform="rotate(309 277 590.8)" opacity="0.93"/>
<circle cx="277" cy="590.8" r="2.4" fill="#fff"/>
<rect x="310.6" y="582.6" width="18.4" height="17" rx="2.2" fill="#0a2030" stroke="#2fb4dc" stroke-width="1.2"/><text x="313.2" y="595.4" font-size="11.4" fill="#d4f0ff">Ps</text>
<rect x="359" y="584" width="11.6" height="14.6" rx="1" fill="#e8f4ea" stroke="#1f7a45" stroke-width="0.9"/><path d="M362.4,584 v14.6 M366,584 v14.6 M359,587.6 h11.6 M359,591.2 h11.6 M359,594.8 h11.6" stroke="#3c9a60" stroke-width="0.8"/><path d="M352.6,584.2 l10,-1.6 v17.6 l-10,-1.6 z" fill="#1f7a45"/><text x="354.2" y="595" font-size="9" font-weight="bold" fill="#fff">X</text>
<path d="M400.6,583.6 l12,-1.6 v16 l-12,-1.6 z" fill="#b040b0"/><rect x="402.4" y="585.4" width="9" height="10" fill="#d890d8" opacity="0.8"/><text x="403" y="594.6" font-size="10" font-weight="bold" font-style="italic" fill="#fff">f</text><path d="M394.4,586.4 q4,1 5.4,5.4 q4,0.6 5,4.4 q4,-0.4 7.6,2.2 q-3.6,4 -9,2.2 q-4.6,1 -7,-3.6 q-3,-3.6 -2,-10.6 z" fill="#c86414" opacity="0.95"/>
<rect x="436" y="583" width="21" height="16.4" fill="#fff"/><path d="M446.4,585 l7.8,12.6 h-15.6 z" fill="none" stroke="#e81c24" stroke-width="2"/><path d="M446.4,590 l3.4,5.4 h-6.8 z" fill="none" stroke="#e81c24" stroke-width="1.3"/>
<rect x="478" y="581" width="20.4" height="20.4" rx="2" fill="#14a0a0"/><circle cx="480.6" cy="583.6" r="0.9" fill="#0a5a5a"/><circle cx="495.8" cy="583.6" r="0.9" fill="#0a5a5a"/><circle cx="480.6" cy="598.8" r="0.9" fill="#0a5a5a"/><circle cx="495.8" cy="598.8" r="0.9" fill="#0a5a5a"/>
<path d="M480.6,596 l4,-3.4 l2.4,2 l4,-4.4 l2.2,1.6 l3.4,-5.6" stroke="#2a2ae0" stroke-width="3.4" fill="none"/><path d="M480.6,594.6 l4,-3.4 l2.4,2 l4,-4.4 l2.2,1.6 l3.4,-5.6" stroke="#e828e8" stroke-width="1.8" fill="none"/>
<g transform="rotate(-8 815.5 582.5)"><rect x="809.4" y="576.4" width="12.4" height="12.4" rx="2.4" fill="#f4511e"/><text x="810.6" y="587" font-size="11.6" font-weight="bold" font-style="italic" fill="#fff" textLength="10" lengthAdjust="spacingAndGlyphs">S</text></g>
<rect x="844" y="583.6" width="5" height="2.6" fill="#d8d8d8"/><rect x="842.6" y="586" width="7.8" height="11" rx="1" fill="#3cb43c"/><path d="M846.5,588 v6.6 M844.6,590.6 l1.9,1.6 l1.9,-1.6" stroke="#fff" stroke-width="0.9" fill="none"/>
<path d="M861,593.6 l4.6,-4.6 l4.6,4.6" stroke="#fff" stroke-width="1.2" fill="none"/>
<rect x="881.6" y="588.4" width="10.8" height="6.4" fill="none" stroke="#fff" stroke-width="1.1"/><rect x="883.4" y="590.2" width="4" height="2.8" fill="#fff"/><path d="M880,586.4 l3,2 M880.4,590 h1.4" stroke="#fff" stroke-width="1.1"/>
<path d="M901.6,596.6 q0.4,-9.6 9.6,-10.4" stroke="#9aa0a8" stroke-width="1.1" fill="none"/><path d="M904.4,596.6 q0.4,-6.8 6.8,-7.4" stroke="#9aa0a8" stroke-width="1.1" fill="none"/><path d="M907.2,596.6 q0.2,-3.8 4,-4.4" stroke="#9aa0a8" stroke-width="1.1" fill="none"/><circle cx="910.4" cy="596" r="1.1" fill="#b8bcc4"/>
<path d="M919.6,589.4 h2.4 l3.4,-3 v10 l-3.4,-3 h-2.4 z" fill="none" stroke="#d8dce0" stroke-width="1"/><path d="M927.4,588.6 q2,2.8 0,5.8 M929.6,586.8 q3.4,4.6 0,9.4" stroke="#c0c4c8" stroke-width="1" fill="none"/>
<text x="944" y="587.6" font-size="10.8" fill="#fff" textLength="50.5" lengthAdjust="spacingAndGlyphs">20:50 周六</text><text x="942.6" y="601.2" font-size="11" fill="#fff" textLength="52.6" lengthAdjust="spacingAndGlyphs">2022/9/10</text>
<rect x="1011" y="585.4" width="13" height="11.4" fill="none" stroke="#fff" stroke-width="1.1"/><path d="M1015.4,588.4 l4.6,2.7 l-4.6,2.7 z" fill="#fff"/>
<path d="M1045.6,584.6 h12.4 v10 h-5.4 l-3,3 v-3 h-4 z" fill="#fff"/><path d="M1047.6,587.4 h8.4 M1047.6,589.8 h8.4 M1047.6,592.2 h5" stroke="#131b25" stroke-width="0.7"/><circle cx="1058" cy="597.6" r="4.6" fill="#131b25" stroke="#fff" stroke-width="1"/><text x="1058" y="600.8" font-size="8.6" fill="#fff" text-anchor="middle">1</text>
</svg>
<div class="abs" style="left:655px;top:554.6px;width:176px;height:20.4px;background:#fff;border:1px solid #cfd4e4;border-bottom:0;border-radius:1px"></div>
<svg class="abs" style="left:630px;top:548px" width="210" height="44" viewBox="630 548 210 44" font-family="Liberation Sans,Noto Sans CJK SC,sans-serif">
<g transform="rotate(-8 649 563.5)"><rect x="638" y="552.5" width="22" height="22" rx="4" fill="#f4511e"/><text x="640.4" y="571" font-size="20" font-weight="bold" font-style="italic" fill="#fff" textLength="17.4" lengthAdjust="spacingAndGlyphs">S</text></g>
<text x="665.6" y="570" font-size="12.6" font-weight="bold" fill="#1c73d2">中</text>
<circle cx="687.2" cy="562.6" r="1.7" fill="#1c73d2"/><path d="M692.4,563.4 q2,0.2 1.2,2.6 l-1.4,1.6 z" fill="#1c73d2"/><circle cx="692.8" cy="564" r="1.3" fill="#1c73d2"/>
<circle cx="709" cy="564.6" r="6" fill="none" stroke="#1c73d2" stroke-width="1.3"/><path d="M707,562 v2.4 M711,562 v2.4" stroke="#1c73d2" stroke-width="1.2"/><path d="M706,566.6 q3,2.8 6,0" stroke="#1c73d2" stroke-width="1.1" fill="none"/>
<rect x="724.8" y="558" width="4.6" height="8.6" rx="2.3" fill="#1c73d2"/><path d="M722.6,564 q0,5 4.5,5 q4.5,0 4.5,-5 M727.1,569 v2.4" stroke="#1c73d2" stroke-width="1.2" fill="none"/>
<path d="M741.2,559.2 h9.6 v3 M741.2,559.2 v7 h3.4 M742.6,568.8 l2,-2.4" stroke="#1c73d2" stroke-width="1.5" fill="none"/><rect x="746.4" y="562.4" width="5.6" height="8.4" rx="1" fill="#fff" stroke="#1c73d2" stroke-width="1.4"/>
<rect x="758" y="559.8" width="13" height="9" rx="1.2" fill="#1c73d2"/><path d="M760,562 h9 M760,564.3 h9" stroke="#fff" stroke-width="1" stroke-dasharray="1.1,0.9"/><path d="M761.4,566.8 h6.2" stroke="#fff" stroke-width="1"/>
<circle cx="783.4" cy="561.4" r="2.4" fill="#b8c4d4"/><path d="M778.6,570.6 q0.4,-6 4.8,-6 q4.4,0 4.8,6 z" fill="#b8c4d4"/><rect x="783.6" y="566.4" width="7.6" height="5" rx="2" fill="#ccd4e0"/><text x="784.6" y="570.6" font-size="4.6" font-weight="bold" fill="#fff">15</text>
<path d="M798.6,558.4 l-3.6,2.2 l1.4,2.6 l1.6,-0.8 v8 h6.8 v-8 l1.6,0.8 l1.4,-2.6 l-3.6,-2.2 q-2.8,1.8 -5.6,0 z" fill="#1c73d2"/>
<rect x="814.6" y="559" width="5" height="5" fill="#1c73d2"/><rect x="814.6" y="565.2" width="5" height="5" fill="#1c73d2"/><rect x="820.8" y="565.2" width="5" height="5" fill="#1c73d2"/><rect x="820.8" y="559" width="5" height="5" fill="#1c73d2" transform="rotate(8 823.3 561.5)"/><circle cx="823.6" cy="561.2" r="1" fill="#fff"/>
</svg>
<!--OVER-->
</body></html>
